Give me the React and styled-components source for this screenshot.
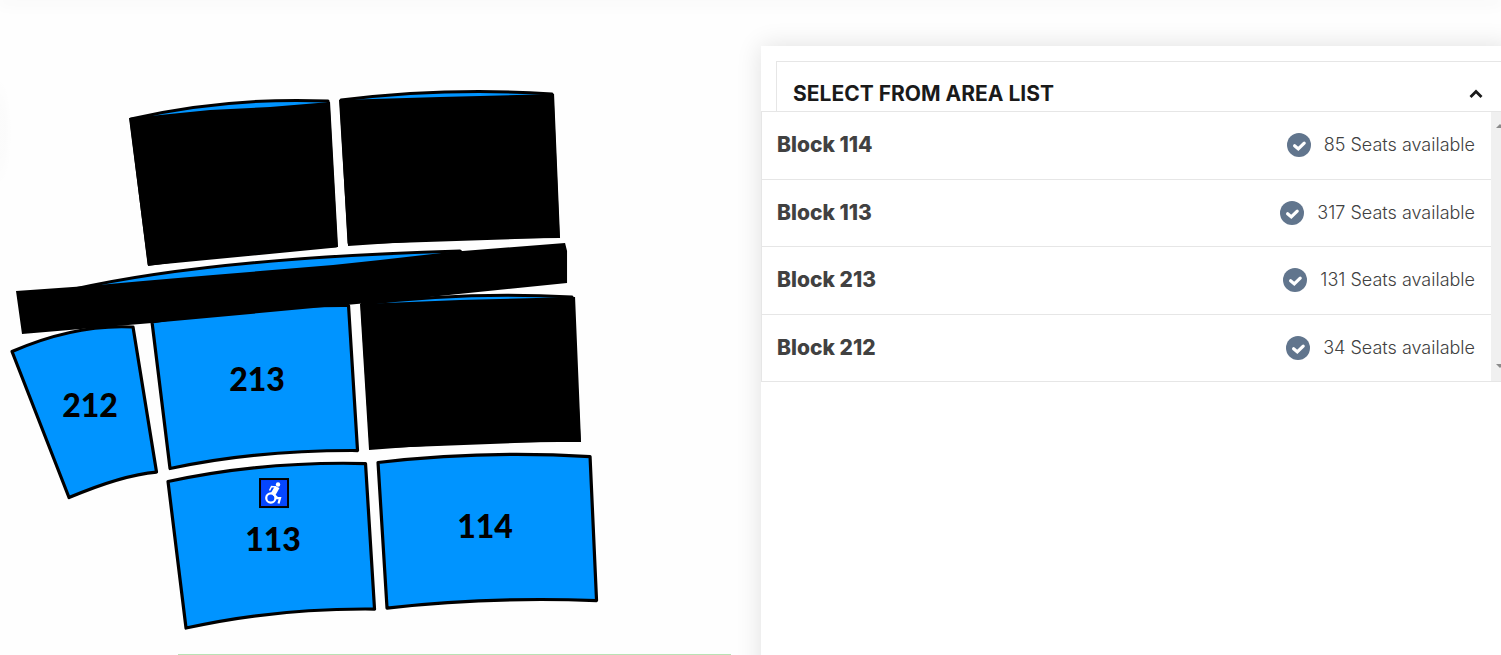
import React, { useState } from 'react';
import styled, { createGlobalStyle } from 'styled-components';

const palette = {
    blue: '#0094ff',
    access: '#0546ff',
    slate: '#61758d',
    line: '#e6e6e6',
    track: '#f0f0f0',
    title: '#1a1a1a',
    text: '#414141',
};

const GlobalStyle = createGlobalStyle`
    * {
        box-sizing: border-box;
    }
    body {
        margin: 0;
        background: #fefefe;
        font-family: Inter, "Liberation Sans", sans-serif;
    }
`;

const Page = styled.div`
    display: flex;
    flex-direction: column;
    height: 100vh;
    overflow: hidden;
`;

const TopEdge = styled.header`
    flex: none;
    box-shadow: 0 0 16px 2px rgba(0, 0, 0, 0.08);
`;

const Content = styled.main`
    flex: 1;
    display: grid;
    grid-template-columns: 36fr 35fr;
    min-height: 0;
`;

const MapColumn = styled.section`
    min-width: 0;
`;

const MapSvg = styled.svg`
    display: block;
    width: 100%;
    height: auto;
`;

const BlockLabel = styled.text`
    font-family: Lato, "Open Sans", sans-serif;
    font-size: 32px;
    font-weight: 900;
    text-anchor: middle;
`;

const Legend = styled.div`
    height: 48px;
    margin: 0 4% 0 23.4%;
    border: 1px solid #b9e2b4;
`;

const SidePanel = styled.aside`
    margin: 46px -10px 0 0;
    padding-top: 15px;
    background: #fff;
    box-shadow: 0 0 24px rgba(0, 0, 0, 0.12);
`;

const AreaToggle = styled.button`
    display: flex;
    align-items: center;
    justify-content: space-between;
    width: calc(100% - 15px);
    height: 50px;
    margin: 0 0 0 15px;
    padding: 14px 13px 0 16px;
    border: solid ${palette.line};
    border-width: 1px 0 0 1px;
    background: none;
    color: ${palette.title};
    font-family: inherit;
    font-size: 21px;
    font-weight: 700;
    line-height: 24px;
    text-transform: uppercase;
    cursor: pointer;
`;

const Chevron = styled.svg`
    width: 14px;
    height: 10px;
    margin-right: 15px;
    transform: ${({ $open }) => ($open ? 'none' : 'rotate(180deg)')};
`;

const AreaBox = styled.div`
    display: flex;
    border: 1px solid ${palette.line};
`;

const AreaList = styled.ul`
    flex: 1;
    display: flex;
    flex-direction: column;
    min-height: 269px;
    margin: 0;
    padding: 0;
    list-style: none;
`;

const AreaItem = styled.li`
    flex: 1;
    display: flex;
    border-bottom: 1px solid ${palette.line};

    &:last-child {
        border-bottom: none;
    }
`;

const AreaButton = styled.button`
    flex: 1;
    display: flex;
    align-items: center;
    justify-content: space-between;
    padding: 0 16px 0 15px;
    border: none;
    background: none;
    color: ${palette.text};
    font-family: inherit;
    cursor: pointer;
`;

const AreaName = styled.span`
    font-size: 21px;
    font-weight: 800;
    line-height: 24px;
`;

const Seats = styled.span`
    display: flex;
    align-items: center;
    gap: 13px;
    font-size: 18px;
    font-weight: 300;
    line-height: 24px;
`;

const ScrollTrack = styled.div`
    display: flex;
    flex-direction: column;
    align-items: center;
    justify-content: space-between;
    width: 19px;
    padding: 12px 0 13px;
    background: ${palette.track};
`;

const areas = [
    { id: 114, seats: 85 },
    { id: 113, seats: 317 },
    { id: 213, seats: 131 },
    { id: 212, seats: 34 },
];

const openBlocks = [
    { id: 212, x: 90, y: 417, d: 'M12 351.500Q75 324 133 327L156.500 472Q122 475 69 497.500Z' },
    { id: 213, x: 257, y: 391, d: 'M152 322Q245 305 348.500 305.500L357.500 450.500Q255 450 170 468.500Z' },
    { id: 113, x: 273, y: 551, d: 'M168 481.500Q262 461 365.500 463.500L374.500 609Q275 608 186 628Z' },
    { id: 114, x: 485, y: 538, d: 'M378 462.500Q482 450 590 456.500L596.500 600.500Q487 596.500 387 608Z' },
];

// top curve of the blocks that are blacked out
const closedBlocks = [
    'M131 119Q225 97 328 101L336 246L149 264Z',
    'M341 100Q448 87 552 94L558 236L349 243Z',
    'M70 290Q210 258 460 251L480 270L60 310Z',
    'M362 304Q470 291 572 297L579 439L371 447Z',
];

const covers = [
    'M129 118L150 116L210 110L270 107L330 102L338 247Q240 252 148 266Z',
    'M339 100L440 97L554 94L560 238Q450 238 348 246Z',
    'M16 291L87 286L143 281L213 275L333 265L380 260L450 252L565 243L567 251L567 283L400 300L152 323L22 334Z',
    'M360 304L460 300L575 297L581 442Q470 441 369 450Z',
];

const Wheelchair = () => (
    <g>
        <rect x="260" y="479" width="28" height="28" fill={palette.access} stroke="#000" strokeWidth="2" />
        <circle cx="278" cy="484.500" r="2.200" fill="#fff" />
        <path d="M275 486L279.500 488L275.500 495L270.500 493.500Z" fill="#fff" />
        <path d="M276 487L271.500 486.500L269.500 490.500" fill="none" stroke="#fff" strokeWidth="1.500" />
        <circle cx="270.800" cy="498" r="4.600" fill="none" stroke="#fff" strokeWidth="2.200" />
        <path d="M273 494L277 497.500M275 498H280L278.500 503.500" fill="none" stroke="#fff" strokeWidth="2.200" />
    </g>
);

const SeatMap = () => (
    <MapSvg viewBox="0 0 761 654" role="img" aria-label="Seat map">
        <defs>
            <radialGradient id="edge">
                <stop offset="0.5" stopColor="#000" stopOpacity="0.01" />
                <stop offset="1" stopColor="#000" stopOpacity="0" />
            </radialGradient>
        </defs>
        <ellipse cx="0" cy="132" rx="12" ry="55" fill="url(#edge)" />
        <g fill={palette.blue} stroke="#000" strokeWidth="3.200" strokeLinejoin="round">
            {openBlocks.map(({ id, d }) => <path key={id} d={d} />)}
            {closedBlocks.map((d) => <path key={d} d={d} strokeWidth="3" />)}
        </g>
        {covers.map((d) => <path key={d} d={d} />)}
        {openBlocks.map(({ id, x, y }) => (
            <BlockLabel key={id} x={x} y={y}>{id}</BlockLabel>
        ))}
        <Wheelchair />
    </MapSvg>
);

const CheckIcon = () => (
    <svg width="24" height="24" viewBox="0 0 24 24" aria-hidden="true">
        <circle cx="12" cy="12" r="12" fill={palette.slate} />
        <path d="M7.600 12.700L11.300 15.900L17.200 10.200" fill="none" stroke="#fff" strokeWidth="3.200" strokeLinecap="round" />
    </svg>
);

const AreaRow = ({ area }) => (
    <AreaItem>
        <AreaButton type="button">
            <AreaName>Block {area.id}</AreaName>
            <Seats>
                <CheckIcon />
                <span>{area.seats} Seats available</span>
            </Seats>
        </AreaButton>
    </AreaItem>
);

const AreaPanel = () => {
    const [open, setOpen] = useState(true);

    return (
        <SidePanel>
            <AreaToggle type="button" aria-expanded={open} onClick={() => setOpen(!open)}>
                Select from area list
                <Chevron $open={open} viewBox="0 0 14 10" aria-hidden="true">
                    <path d="M1.500 8L7 2.500L12.500 8" fill="none" stroke="currentColor" strokeWidth="2.800" />
                </Chevron>
            </AreaToggle>
            {open && (
                <AreaBox>
                    <AreaList>
                        {areas.map((area) => <AreaRow key={area.id} area={area} />)}
                    </AreaList>
                    <ScrollTrack aria-hidden="true">
                        <svg width="8" height="4"><path d="M0 4L4 0L8 4Z" fill="#8b8b8b" /></svg>
                        <svg width="8" height="4"><path d="M0 0L4 4L8 0Z" fill="#8b8b8b" /></svg>
                    </ScrollTrack>
                </AreaBox>
            )}
        </SidePanel>
    );
};

const App = () => (
    <Page>
        <GlobalStyle />
        <TopEdge />
        <Content>
            <MapColumn>
                <SeatMap />
                <Legend />
            </MapColumn>
            <AreaPanel />
        </Content>
    </Page>
);

export default App;
